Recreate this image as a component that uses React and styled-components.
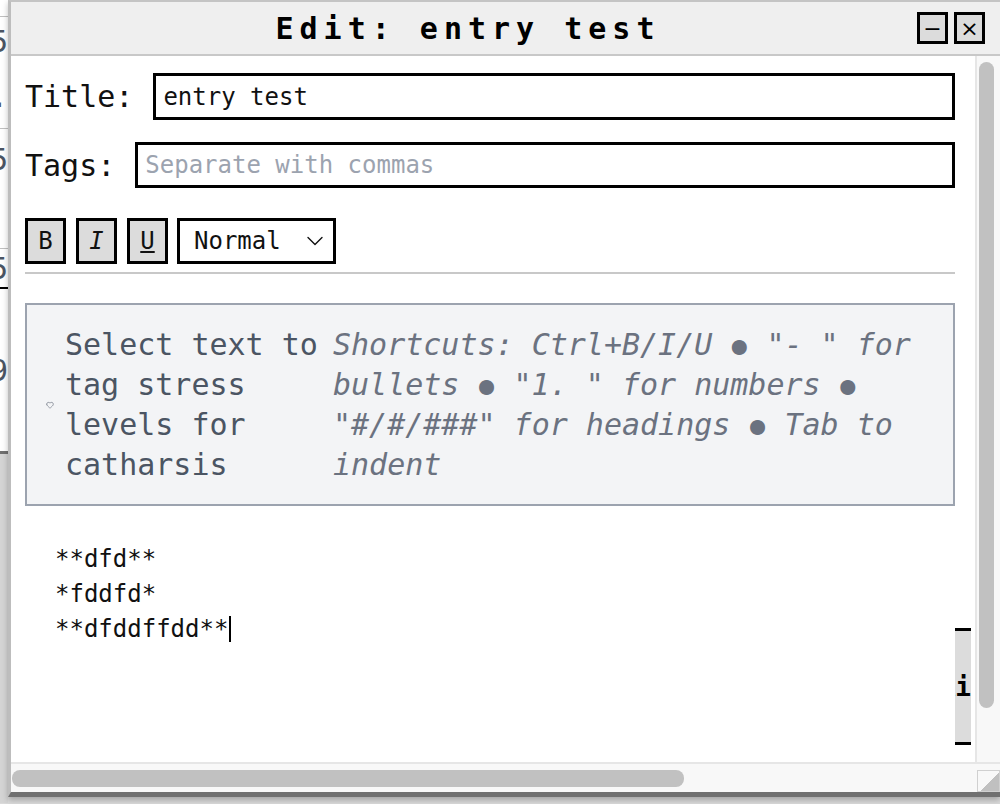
import styled, { createGlobalStyle } from "styled-components";
import { ChevronDown, Heart } from "lucide-react";

const GlobalStyle = createGlobalStyle`
  html, body {
    margin: 0;
    padding: 0;
    background: #dadada;
  }
  * {
    box-sizing: border-box;
  }
`;

const mono = `"DejaVu Sans Mono", "Liberation Mono", monospace`;

const Desktop = styled.div`
  display: flex;
  width: 1000px;
  height: 804px;
  overflow: hidden;
  font-family: ${mono};
`;

const LeftStrip = styled.div`
  width: 8px;
  display: flex;
  flex-direction: column;
  flex-shrink: 0;
`;

const StripRow = styled.div`
  height: ${(p) => p.$h}px;
  background: ${(p) => p.$bg || "#fff"};
  border-bottom: ${(p) => p.$line || "none"};
  display: flex;
  justify-content: flex-end;
  align-items: center;
  overflow: hidden;
  font-size: 30px;
  color: #4b5563;
  white-space: nowrap;
`;

const Window = styled.div`
  flex: 1;
  height: 797px;
  display: flex;
  flex-direction: column;
  background: #fff;
  border-left: 3px solid #bdbdbd;
  border-top: 2px solid #c4c4c4;
  border-bottom: 5px solid #707070;
  box-shadow: 0 3px 6px rgba(0, 0, 0, 0.25);
`;

const TitleBar = styled.div`
  height: 54px;
  flex-shrink: 0;
  display: flex;
  align-items: center;
  gap: 6px;
  padding: 0 15px 0 14px;
  background: #efefef;
  border-bottom: 2px solid #c8c8c8;
`;

const TitleText = styled.div`
  flex: 1;
  text-align: center;
  font-size: 30px;
  font-weight: bold;
  letter-spacing: 6px;
  color: #000;
`;

const WinButton = styled.button`
  width: 31px;
  height: 32px;
  padding: 0;
  display: flex;
  align-items: center;
  justify-content: center;
  background: #dcdcdc;
  border: 3px solid #000;
  font-family: "DejaVu Sans", sans-serif;
  font-size: 22px;
  color: #000;
`;

const Body = styled.div`
  flex: 1;
  display: grid;
  grid-template-columns: 1fr 25px;
  grid-template-rows: 1fr 30px;
  min-height: 0;
`;

const Content = styled.div`
  position: relative;
  overflow: hidden;
  padding: 17px 20px 0 14px;
`;

const FieldRow = styled.div`
  display: flex;
  align-items: center;
  gap: 20px;
  margin-bottom: ${(p) => p.$mb || 0}px;
`;

const Label = styled.label`
  font-size: 30px;
  color: #111;
`;

const TextInput = styled.input`
  flex: 1;
  height: ${(p) => p.$h || 47}px;
  padding: 0 7px;
  border: 3px solid #000;
  font-family: ${mono};
  font-size: 24px;
  color: #111;
  background: #fff;
  outline: none;
  &::placeholder {
    color: #9ca3af;
  }
`;

const Toolbar = styled.div`
  display: flex;
  gap: 10px;
  padding-bottom: 8px;
  border-bottom: 2px solid #c8c8c8;
`;

const FormatButton = styled.button`
  width: 41px;
  height: 46px;
  padding: 0;
  background: #dcdcdc;
  border: 3px solid #000;
  font-family: ${mono};
  font-size: 24px;
  color: #111;
  font-style: ${(p) => (p.$italic ? "italic" : "normal")};
  text-decoration: ${(p) => (p.$underline ? "underline" : "none")};
`;

const Select = styled.div`
  width: 159px;
  height: 46px;
  display: flex;
  align-items: center;
  justify-content: space-between;
  padding: 0 4px 0 14px;
  margin-left: -1px;
  border: 3px solid #000;
  background: #fff;
  font-size: 24px;
  color: #111;
`;

const InfoBox = styled.div`
  margin-top: 29px;
  display: grid;
  grid-template-columns: 38px 256px 1fr;
  column-gap: 0;
  padding: 20px 14px 19px 0;
  background: #f3f4f6;
  border: 2px solid #9ca3af;
  font-size: 30px;
  line-height: 40px;
`;

const HeartCell = styled.div`
  display: flex;
  align-items: center;
  justify-content: center;
  padding-left: 8px;
  color: #6b7280;
`;

const HintLeft = styled.div`
  color: #4b5563;
`;

const HintRight = styled.div`
  padding-left: 12px;
  color: #6b7280;
  font-style: italic;
`;

const Dot = styled.span`
  display: inline-block;
  width: 18px;
  line-height: 1;
  text-align: center;
  font-size: 25px;
  font-style: normal;
  vertical-align: 1px;
`;

const Editor = styled.div`
  margin-top: 36px;
  padding-left: 30px;
  font-size: 24px;
  line-height: 35px;
  color: #111;
`;

const Caret = styled.span`
  display: inline-block;
  width: 2px;
  height: 26px;
  margin-left: 1px;
  vertical-align: -5px;
  background: #000;
`;

const SideTab = styled.div`
  position: absolute;
  left: 944px;
  top: 572px;
  width: 16px;
  height: 117px;
  display: flex;
  align-items: center;
  justify-content: flex-end;
  overflow: hidden;
  background: #dcdcdc;
  border-top: 3px solid #000;
  border-bottom: 3px solid #000;
  font-size: 26px;
  font-weight: bold;
  white-space: nowrap;
`;

const VScroll = styled.div`
  border-left: 2px solid #e6e6e6;
  background: #f8f8f8;
  padding: 6px 0 0 2px;
`;

const VThumb = styled.div`
  width: 15px;
  height: 646px;
  border-radius: 8px;
  background: #c1c1c1;
`;

const HScroll = styled.div`
  border-top: 2px solid #e6e6e6;
  background: #f8f8f8;
  padding: 6px 0 0 1px;
`;

const HThumb = styled.div`
  width: 672px;
  height: 17px;
  border-radius: 8px;
  background: #c1c1c1;
`;

const Corner = styled.div`
  background: #f8f8f8;
  border-top: 2px solid #e6e6e6;
  padding: 6px 0 0 2px;
`;

const Grip = styled.div`
  height: 22px;
  border: 1px solid #d0d0d0;
  background: linear-gradient(135deg, transparent 55%, #c0c0c0 55%);
`;

const strip = [
  { h: 17, line: "1px solid #c0c0c0" },
  { h: 48, text: "5" },
  { h: 64, text: ".", line: "1px solid #c0c0c0" },
  { h: 60, text: "5" },
  { h: 60, line: "1px solid #c0c0c0" },
  { h: 40, text: "5", line: "2px solid #000" },
  { h: 162, text: "9" },
  { h: 3, bg: "#707070" },
  { h: 349, bg: "#d4d4d4" },
];

export default function App() {
  return (
    <>
      <GlobalStyle />
      <Desktop>
        <LeftStrip>
          {strip.map((r, i) => (
            <StripRow key={i} $h={r.h} $bg={r.bg} $line={r.line}>
              {r.text && <span>{r.text}</span>}
            </StripRow>
          ))}
        </LeftStrip>
        <Window>
          <TitleBar>
            <TitleText>Edit: entry test</TitleText>
            <WinButton>−</WinButton>
            <WinButton>×</WinButton>
          </TitleBar>
          <Body>
            <Content>
              <FieldRow $mb={22}>
                <Label>Title:</Label>
                <TextInput defaultValue="entry test" />
              </FieldRow>
              <FieldRow $mb={30}>
                <Label>Tags:</Label>
                <TextInput $h={46} placeholder="Separate with commas" />
              </FieldRow>
              <Toolbar>
                <FormatButton>B</FormatButton>
                <FormatButton $italic>I</FormatButton>
                <FormatButton $underline>U</FormatButton>
                <Select>
                  Normal
                  <ChevronDown size={28} strokeWidth={1.2} />
                </Select>
              </Toolbar>
              <InfoBox>
                <HeartCell>
                  <Heart size={8} strokeWidth={2} />
                </HeartCell>
                <HintLeft>Select text to tag stress levels for catharsis</HintLeft>
                <HintRight>
                  Shortcuts: Ctrl+B/I/U <Dot>●</Dot> "- " for bullets <Dot>●</Dot> "1. " for
                  numbers <Dot>●</Dot> "#/#/###" for headings <Dot>●</Dot> Tab to indent
                </HintRight>
              </InfoBox>
              <Editor>
                <div>**dfd**</div>
                <div>*fddfd*</div>
                <div>
                  **dfddffdd**
                  <Caret />
                </div>
              </Editor>
              <SideTab>
                <span>Ai</span>
              </SideTab>
            </Content>
            <VScroll>
              <VThumb />
            </VScroll>
            <HScroll>
              <HThumb />
            </HScroll>
            <Corner>
              <Grip />
            </Corner>
          </Body>
        </Window>
      </Desktop>
    </>
  );
}
